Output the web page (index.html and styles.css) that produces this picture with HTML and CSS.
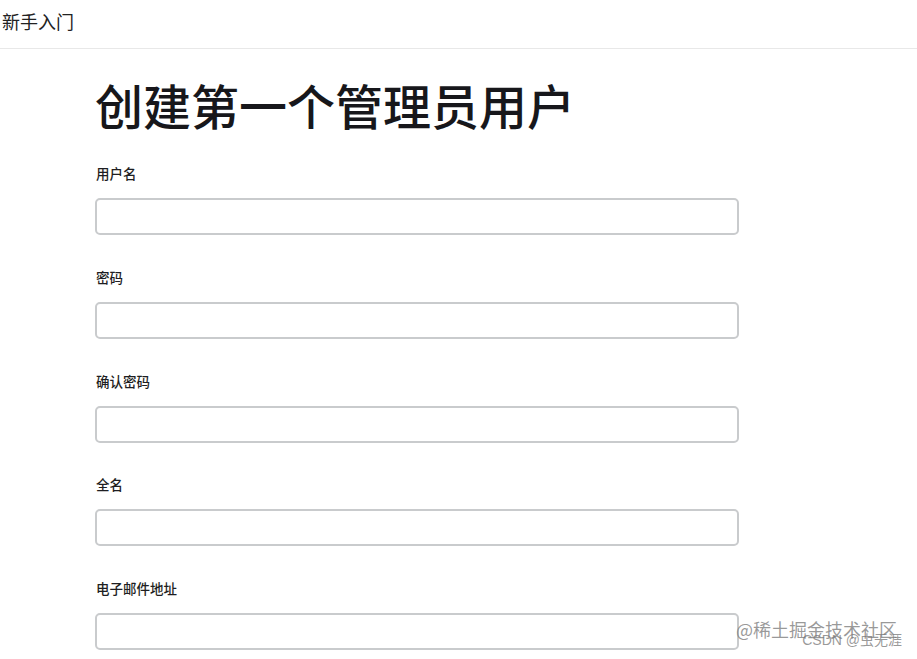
FILE: index.html
```html
<!DOCTYPE html>
<html lang="zh-CN">
<head>
<meta charset="utf-8">
<title>新手入门</title>
<link rel="stylesheet" href="styles.css">
</head>
<body>
<header class="topbar">新手入门</header>
<main class="content">
  <h1 class="title">创建第一个管理员用户</h1>
  <form class="form">
    <div class="field">
      <label class="label">用户名</label>
      <input class="input" type="text">
    </div>
    <div class="field">
      <label class="label">密码</label>
      <input class="input" type="password">
    </div>
    <div class="field">
      <label class="label">确认密码</label>
      <input class="input" type="password">
    </div>
    <div class="field">
      <label class="label">全名</label>
      <input class="input" type="text">
    </div>
    <div class="field">
      <label class="label">电子邮件地址</label>
      <input class="input" type="text">
    </div>
  </form>
</main>
<div class="watermark">
  <span class="wm-main">@稀土掘金技术社区</span>
  <span class="wm-sub">CSDN @虫无涯</span>
</div>
</body>
</html>
```
FILE: styles.css
```css
html, body {
  margin: 0;
  padding: 0;
  background: #ffffff;
  overflow: hidden;
}
body {
  font-family: "Noto Sans CJK SC", "Noto Sans", "Liberation Sans", sans-serif;
  color: #1b1b1f;
  height: 659px;
  position: relative;
}
.topbar {
  height: 40px;
  padding: 8px 2px 0;
  box-sizing: content-box;
  font-size: 18px;
  line-height: 26px;
  border-bottom: 1px solid #e8e8e8;
  color: #222;
}
.content {
  padding-left: 95px;
  padding-top: 25px;
}
.title {
  margin: 0 0 29px;
  font-size: 48px;
  line-height: 60px;
  font-weight: 500;
  color: #17171b;
}
.form {
  display: flex;
  flex-direction: column;
  gap: 31.75px;
  width: 644px;
}
.field {
  display: flex;
  flex-direction: column;
  gap: 15px;
}
.label {
  font-size: 13.5px;
  line-height: 20px;
  font-weight: 500;
  color: #1e1e22;
  padding-left: 1px;
}
.input {
  height: 37px;
  box-sizing: border-box;
  border: 2px solid #c9cbcd;
  border-radius: 5px;
  background: #fff;
  margin: 0;
  padding: 0 10px;
  width: 644px;
}
.watermark {
  position: absolute;
  right: 15px;
  top: 616px;
  width: 166px;
  height: 36px;
}
.wm-main {
  position: absolute;
  left: 0;
  top: 0;
  font-size: 18px;
  line-height: 26px;
  color: rgba(120,120,120,0.75);
  white-space: nowrap;
}
.wm-sub {
  position: absolute;
  right: 0;
  top: 15px;
  font-family: "Liberation Sans", "Noto Sans CJK SC", sans-serif;
  font-size: 14px;
  line-height: 18px;
  color: rgba(120,120,120,0.75);
  white-space: nowrap;
}
```
